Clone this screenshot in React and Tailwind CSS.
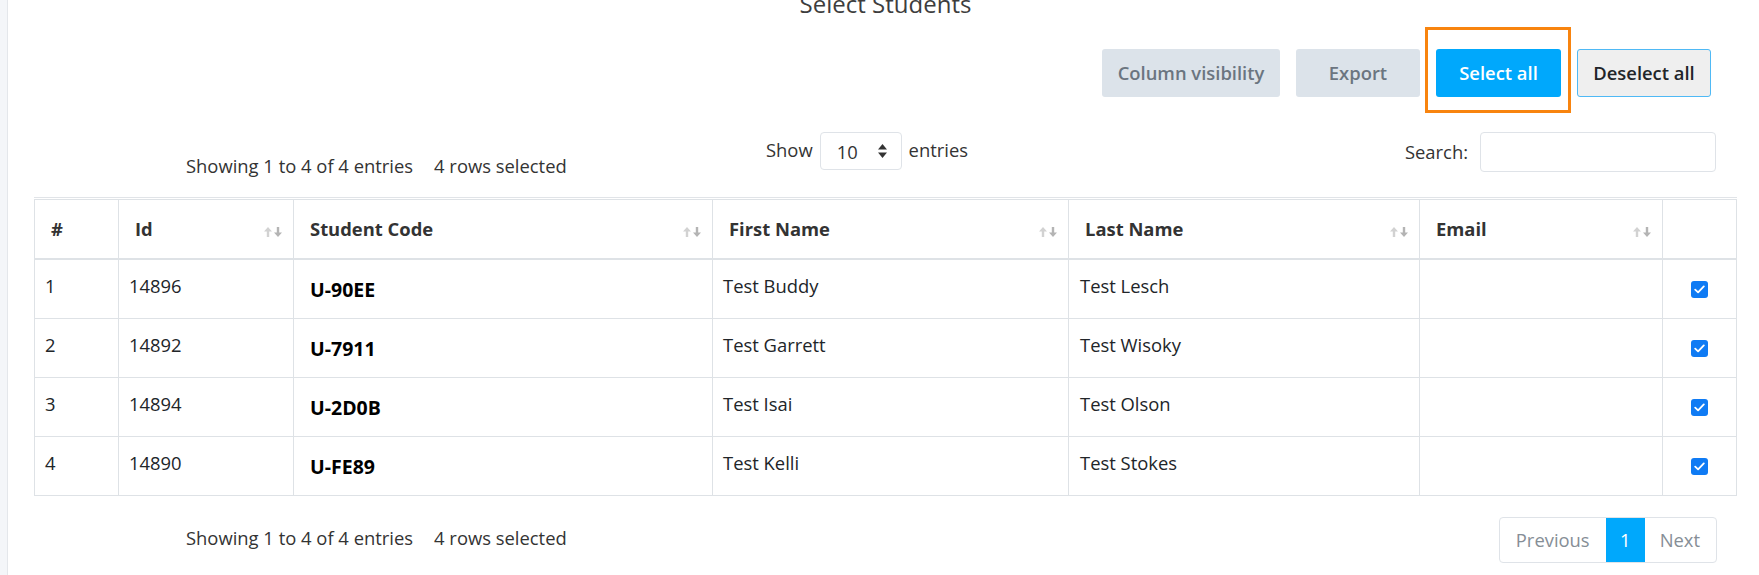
const students = [
  { n: 1, id: 14896, code: 'U-90EE', first: 'Test Buddy', last: 'Test Lesch' },
  { n: 2, id: 14892, code: 'U-7911', first: 'Test Garrett', last: 'Test Wisoky' },
  { n: 3, id: 14894, code: 'U-2D0B', first: 'Test Isai', last: 'Test Olson' },
  { n: 4, id: 14890, code: 'U-FE89', first: 'Test Kelli', last: 'Test Stokes' },
];

function SortIcon() {
  return (
    <svg width="18" height="10" viewBox="0 0 18 10" className="mt-[6px] shrink-0">
      {/* up arrow */}
      <path d="M4 0 L8 4.5 H5.2 V10 H2.8 V4.5 H0 Z" fill="#d2d2d2" />
      {/* down arrow */}
      <path d="M14 10 L18 5.5 H15.2 V0 H12.8 V5.5 H10 Z" fill="#b4b4b4" />
    </svg>
  );
}

function Checkbox() {
  return (
    <div className="mx-auto flex h-[17px] w-[17px] items-center justify-center rounded-[3px] bg-[#0f7bf4]">
      <svg width="11" height="9" viewBox="0 0 11 9" fill="none">
        <path d="M1.2 4.6 L4.1 7.4 L9.8 1.4" stroke="white" strokeWidth="1.8" strokeLinecap="round" strokeLinejoin="round" />
      </svg>
    </div>
  );
}

function Th({ children, sort = true }) {
  return (
    <th className="border border-b-2 border-[#dee2e6] py-4 pl-4 pr-[11px] text-left align-middle font-bold leading-[26px] text-[#333]">
      <div className="flex items-center justify-between">
        <span>{children}</span>
        {sort && <SortIcon />}
      </div>
    </th>
  );
}

export default function App() {
  return (
    <div className="flex h-[575px] overflow-hidden bg-white font-['Open_Sans','Liberation_Sans',sans-serif] text-[18.4px] text-[#212529]">
      {/* left sidebar edge */}
      <div className="w-[8px] shrink-0 border-r border-[#e4e7eb] bg-[#f4f6f9]" />

      <main className="flex-1 pl-[26px] pr-[23px]">
        <h2 className="-mt-[9px] text-center text-[24px] leading-[26px] text-[#3d3d3d]">Select Students</h2>

        {/* Buttons */}
        <div className="mt-[32px] flex justify-end gap-4 pr-[26px]">
          <button className="h-[48px] w-[178px] rounded-[3px] bg-[#dce3ea] font-semibold text-[#6b7580]">Column visibility</button>
          <button className="h-[48px] w-[124px] rounded-[3px] bg-[#dce3ea] font-semibold text-[#6b7580]">Export</button>
          <div className="relative">
            <button className="h-[48px] w-[125px] rounded-[3px] bg-[#00a8fc] font-semibold text-white">Select all</button>
            <div className="pointer-events-none absolute -bottom-[16px] -left-[11px] -right-[10px] -top-[22px] border-[3px] border-[#f8840f]" />
          </div>
          <button className="h-[48px] w-[134px] rounded-[3px] border border-[#4fb9f5] bg-[#efefef] font-semibold text-[#212529]">Deselect all</button>
        </div>

        {/* Info / length / search */}
        <div className="mt-[35px] grid grid-cols-[732px_202px_1fr] items-start">
          <div className="pl-[152px] pt-[21px] leading-[26px] text-[#333]">
            Showing 1 to 4 of 4 entries<span className="ml-[21px]">4 rows selected</span>
          </div>
          <div className="flex items-center gap-[7px] text-[#333]">
            <span className="-mt-[2px]">Show</span>
            <div className="flex h-[38px] w-[84px] items-center justify-between rounded-[4px] border border-[#dfe3e8] pl-[16px] pr-[14px]">
              <span className="mt-[2px]">10</span>
              <svg width="9" height="14" viewBox="0 0 9 14">
                <path d="M4.5 0 L9 5.5 H0 Z" fill="#333" />
                <path d="M4.5 14 L9 8.5 H0 Z" fill="#333" />
              </svg>
            </div>
            <span className="-mt-[2px]">entries</span>
          </div>
          <div className="flex items-center justify-end gap-[12px] pr-[21px] text-[#333]">
            <span>Search:</span>
            <div className="h-[40px] w-[236px] rounded-[4px] border border-[#dfe3e8]" />
          </div>
        </div>

        {/* Table */}
        <div className="mt-[18px] border-t border-[#e1e4e8] pt-px">
          <table className="w-full table-fixed border-collapse">
            <colgroup>
              <col className="w-[84px]" />
              <col className="w-[175px]" />
              <col className="w-[419px]" />
              <col className="w-[356px]" />
              <col className="w-[351px]" />
              <col className="w-[243px]" />
              <col className="w-[74px]" />
            </colgroup>
            <thead>
              <tr>
                <Th sort={false}>#</Th>
                <Th>Id</Th>
                <Th>Student Code</Th>
                <Th>First Name</Th>
                <Th>Last Name</Th>
                <Th>Email</Th>
                <Th sort={false}></Th>
              </tr>
            </thead>
            <tbody>
              {students.map((s) => (
                <tr key={s.n}>
                  <td className="border border-[#dee2e6] pb-[19px] pl-[10px] pt-[13px] align-top leading-[26px]">{s.n}</td>
                  <td className="border border-[#dee2e6] pb-[19px] pl-[10px] pt-[13px] align-top leading-[26px]">{s.id}</td>
                  <td className="border border-[#dee2e6] pb-[15px] pl-4 pt-[17px] align-top text-[19.5px] font-bold leading-[26px] text-black">{s.code}</td>
                  <td className="border border-[#dee2e6] pb-[19px] pl-[10px] pt-[13px] align-top leading-[26px]">{s.first}</td>
                  <td className="border border-[#dee2e6] pb-[19px] pl-[11px] pt-[13px] align-top leading-[26px]">{s.last}</td>
                  <td className="border border-[#dee2e6] pb-[19px] pl-[11px] pt-[13px] align-top leading-[26px]"></td>
                  <td className="border border-[#dee2e6] align-middle">
                    <Checkbox />
                  </td>
                </tr>
              ))}
            </tbody>
          </table>
        </div>

        {/* Footer */}
        <div className="mt-[21px] flex items-start justify-between pr-[20px]">
          <div className="pl-[152px] pt-[8px] leading-[26px] text-[#333]">
            Showing 1 to 4 of 4 entries<span className="ml-[21px]">4 rows selected</span>
          </div>
          <div className="flex h-[46px] overflow-hidden rounded-[4px] border border-[#dfe3e8] text-[#868e96]">
            <span className="flex items-center px-4">Previous</span>
            <span className="flex w-[39px] items-center justify-center bg-[#00a8fc] text-white">1</span>
            <span className="flex items-center pl-[15px] pr-4">Next</span>
          </div>
        </div>
      </main>
    </div>
  );
}
